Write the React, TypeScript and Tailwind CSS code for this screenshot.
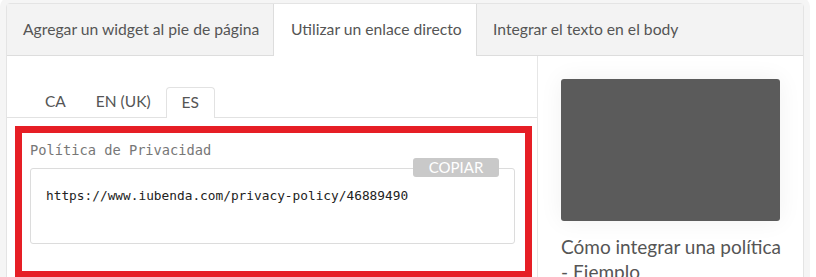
export default function App() {
  const sans = { fontFamily: 'Lato, "Noto Sans", sans-serif' };
  const mono = { fontFamily: '"DejaVu Sans Mono", "Liberation Mono", monospace' };

  return (
    <div className="h-[277px] w-[816px] overflow-hidden bg-white pt-[3px]" style={sans}>
      <div className="ml-[6px] w-[798px] rounded-t-[4px] border border-[#e4e4e4] bg-white shadow-[0_0_0_6px_#f5f5f5]">
        {/* Top tabs */}
        <div className="flex h-[52px] whitespace-nowrap text-[15.7px] text-[#555]">
          <div className="flex w-[267px] items-center border-b border-r border-[#dddddd] bg-[#f3f3f3] px-[16px]">
            Agregar un widget al pie de página
          </div>
          <div className="flex w-[202px] items-center bg-white px-[17px]">
            Utilizar un enlace directo
          </div>
          <div className="flex flex-1 items-center border-b border-l border-[#dddddd] bg-[#f3f3f3] px-[16px]">
            Integrar el texto en el body
          </div>
        </div>

        <div className="flex h-[230px]">
          {/* Left: language tabs + link */}
          <div className="w-[531px] border-r border-[#e6e6e6]">
            <div className="mt-[32px] flex h-[30px] items-end whitespace-nowrap border-b border-[#e2e2e2] pl-[23px] text-[15.5px] text-[#555]">
              <div className="flex h-[30px] items-center px-[15px]">CA</div>
              <div className="flex h-[30px] items-center px-[15px]">EN (UK)</div>
              <div className="-mb-px flex h-[31px] items-center rounded-t-[4px] border border-b-0 border-[#e2e2e2] bg-white px-[15px]">
                ES
              </div>
            </div>

            <div className="ml-[8px] mt-[8px] h-[152px] w-[517px] border-[7px] border-[#e61e25] pl-[8px] pr-[10px] pt-[8px]">
              <div className="h-[19px] text-[13.7px] leading-[19px] text-[#777]" style={mono}>
                Política de Privacidad
              </div>
              <div className="relative mt-[8px] h-[76px] rounded-[3px] border border-[#dcdcdc] bg-white pl-[15px] pt-[18px]">
                <div className="text-[12.8px] leading-[18px] text-[#222]" style={mono}>
                  https://www.iubenda.com/privacy-policy/46889490
                </div>
                <div className="absolute right-[15px] top-[-11px] flex h-[19px] w-[86px] items-center justify-center rounded-[3px] bg-[#c9c9c9] text-[15px] leading-none text-white">
                  COPIAR
                </div>
              </div>
            </div>
          </div>

          {/* Right: sidebar */}
          <div className="flex-1 pl-[23px] pt-[23px]">
            <div className="h-[142px] w-[219px] rounded-[3px] bg-[#5b5b5b] shadow-[0_0_24px_rgba(0,0,0,0.06)]" />
            <div className="mt-[13px] w-[222px] text-[19px] leading-[25px] text-[#555]">
              Cómo integrar una política - Ejemplo
            </div>
          </div>
        </div>
      </div>
    </div>
  );
}
